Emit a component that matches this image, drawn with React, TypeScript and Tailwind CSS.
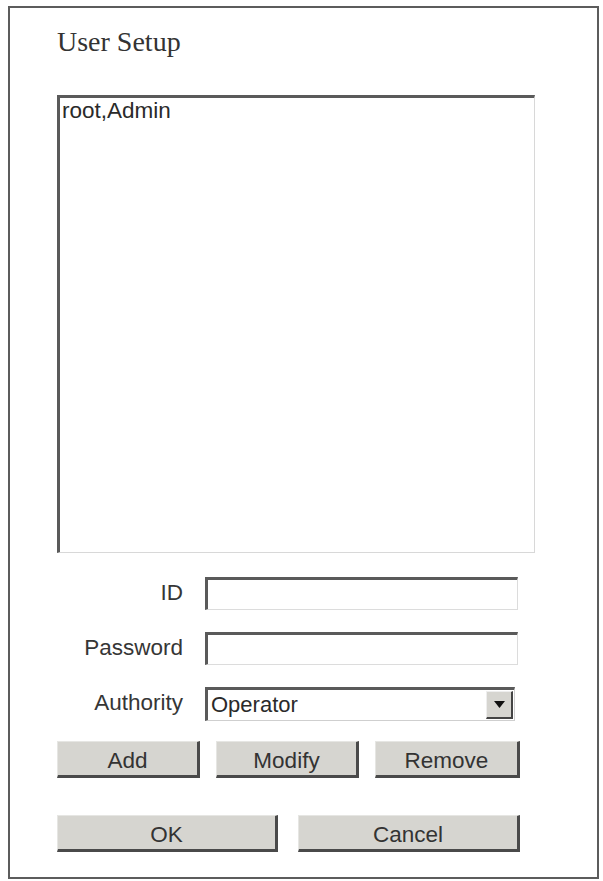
import { useState } from 'react';

const sans = { fontFamily: '"Liberation Sans", Arial, sans-serif' };

const Field = ({ label, children }: { label: string; children: React.ReactNode }) => (
  <div className="flex items-center h-[33px]">
    <span className="w-[126px] text-right text-[22.5px] text-[#363636] leading-none">{label}</span>
    <div className="ml-[22px]">{children}</div>
  </div>
);

const TextBox = ({ type = 'text' }: { type?: string }) => (
  <input
    type={type}
    className="w-[313px] h-[33px] bg-white border-t-[3px] border-l-[3px] border-r border-b border-t-[#5a5a5a] border-l-[#5a5a5a] border-r-[#dcdcdc] border-b-[#dcdcdc] outline-none px-1 text-[22px]"
  />
);

const Btn = ({ label, w }: { label: string; w: string }) => (
  <button
    className={`${w} h-[37px] pt-[6px] bg-[#d6d5d0] border-t border-l border-r-[3px] border-b-[3px] border-t-[#e6e6e3] border-l-[#e6e6e3] border-r-[#4a4a4a] border-b-[#4a4a4a] text-[22.5px] text-[#333] leading-none`}
  >
    {label}
  </button>
);

export default function App() {
  const [authority] = useState('Operator');

  return (
    <div className="w-[603px] h-[881px] bg-white pt-[6px] pl-[8px]" style={sans}>
      <div className="w-[591px] h-[873px] border-2 border-[#5c5c5c] pl-[47px] pt-[20px]">
        <h1
          className="text-[28px] leading-[28px] text-[#333]"
          style={{ fontFamily: '"Liberation Serif", "Times New Roman", serif' }}
        >
          User Setup
        </h1>

        <div className="mt-[39px] w-[478px] h-[458px] border-t-[3px] border-l-[3px] border-r border-b border-t-[#5a5a5a] border-l-[#5a5a5a] border-r-[#d8d8d8] border-b-[#d8d8d8] pl-[2px] pt-[1px]">
          <div className="text-[22.5px] leading-[24px] text-[#2a2a2a]">root,Admin</div>
        </div>

        <div className="mt-[24px] flex flex-col gap-[22px]">
          <Field label="ID">
            <TextBox />
          </Field>
          <Field label="Password">
            <TextBox type="password" />
          </Field>
          <Field label="Authority">
            <div className="w-[310px] h-[34px] flex items-stretch bg-white border-t-[3px] border-l-[3px] border-r border-b border-t-[#5a5a5a] border-l-[#5a5a5a] border-r-[#cfcfcf] border-b-[#cfcfcf]">
              <span className="flex-1 flex items-center pl-[3px] text-[22px] text-[#2a2a2a] leading-none">{authority}</span>
              <span className="w-[27px] my-[1px] mr-[1px] flex items-center justify-center bg-[#d6d5d0] border-t border-l border-r-2 border-b-2 border-t-[#eeeeee] border-l-[#eeeeee] border-r-[#444] border-b-[#444]">
                <svg width="11" height="7" viewBox="0 0 11 7">
                  <path d="M0 0 H11 L5.5 7 Z" fill="#111" />
                </svg>
              </span>
            </div>
          </Field>
        </div>

        <div className="mt-[21px] flex w-[463px] gap-[16px]">
          <Btn label="Add" w="w-[143px]" />
          <Btn label="Modify" w="w-[143px]" />
          <Btn label="Remove" w="w-[145px]" />
        </div>

        <div className="mt-[37px] flex w-[463px] gap-[20px]">
          <Btn label="OK" w="w-[221px]" />
          <Btn label="Cancel" w="w-[222px]" />
        </div>
      </div>
    </div>
  );
}
